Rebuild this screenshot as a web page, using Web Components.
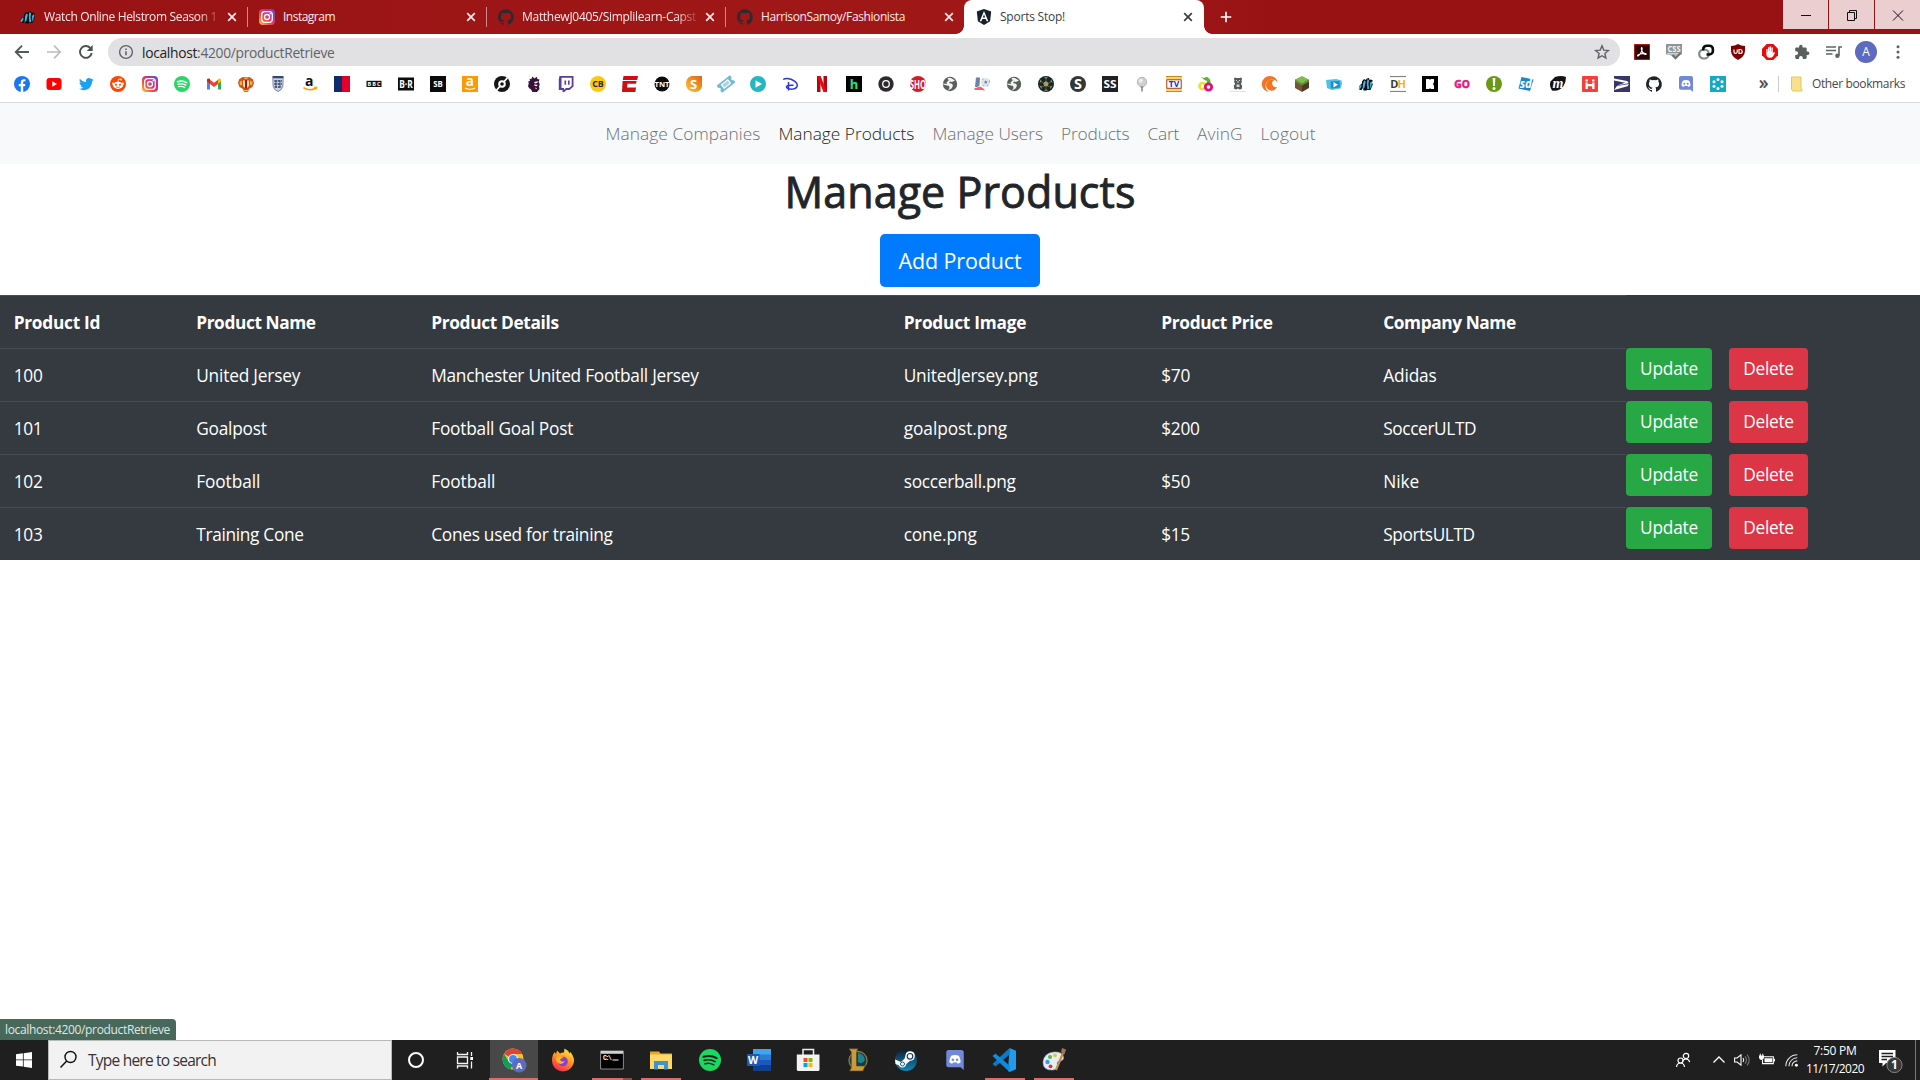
<!DOCTYPE html>
<html lang="en">
<head>
<meta charset="utf-8">
<title>Sports Stop!</title>
<style>
html,body{margin:0;height:100%}
body{width:1920px;height:1080px;overflow:hidden;background:#fff;font-family:"Open Sans","Noto Sans",sans-serif}
</style>
</head>
<body>
<desktop-screen></desktop-screen>
<script>
const T = (x, y, s, fill, txt, extra = '') =>
  `<text x="${x}" y="${y}" font-size="${s}" fill="${fill}" text-anchor="middle" font-family="Open Sans,sans-serif" font-weight="700" ${extra}>${txt}</text>`;
const GH = c => `<path fill="${c}" d="M8 .2a8 8 0 0 0-2.500 15.600c.4.100.5-.2.500-.4v-1.500c-2.200.500-2.700-1-2.700-1-.4-.9-.9-1.200-.9-1.200-.7-.500.100-.500.100-.500.800.100 1.200.8 1.200.8.700 1.200 1.900.9 2.300.7.100-.500.300-.9.500-1.100-1.800-.2-3.600-.9-3.600-4 0-.9.300-1.600.800-2.100-.1-.2-.4-1 .1-2.100 0 0 .7-.2 2.200.8a7.600 7.600 0 0 1 4 0c1.500-1 2.200-.8 2.200-.8.4 1.100.2 1.900.1 2.100.5.600.8 1.300.8 2.100 0 3.100-1.900 3.700-3.700 3.900.3.300.6.800.6 1.500v2.300c0 .2.100.5.600.4A8 8 0 0 0 8 .2z"/>`;
const INSTA = `<defs><linearGradient id="ig" x1="0" y1="1" x2="1" y2="0"><stop offset="0" stop-color="#fdc653"/><stop offset=".35" stop-color="#f0503f"/><stop offset=".65" stop-color="#c32d96"/><stop offset="1" stop-color="#5851db"/></linearGradient></defs><rect width="16" height="16" rx="4" fill="url(#ig)"/><rect x="2.700" y="2.700" width="10.600" height="10.600" rx="3" fill="none" stroke="#fff" stroke-width="1.300"/><circle cx="8" cy="8" r="2.500" fill="none" stroke="#fff" stroke-width="1.300"/><circle cx="11.200" cy="4.800" r=".8" fill="#fff"/>`;
const STRIPES = `<path fill="#0b0d10" d="M1 10.500l2-2.500 1-.5V5.500L6 3l1.500 1L9 2.500 11 2l.5 2 1.500-.5 1.800 1-.8 2 .8 2-2.300 5.500H9l-.5.500H5.500L5 12l-1.500 2H1.500z"/><path fill="#3fb4dd" d="M1 10.800l2.200-2.600.3 2L2 13H.7zM5 7.500l1.200-3 1.600 1-1.500 6.700-1.600.6zM8.800 6l.8-3 1.500 1.200-.6 4 .8 4.500-2 .8zM12 7l1.500-1.800.6 1.500-.8 4-1 2z"/>`;
const SPOT = `<circle cx="8" cy="8" r="8" fill="#1ed760"/><g fill="none" stroke="#16241a" stroke-linecap="round"><path stroke-width="1.500" d="M3.300 5.700c3-.9 6.800-.6 9.500 1"/><path stroke-width="1.200" d="M3.800 8.300c2.700-.8 5.600-.4 7.900.9"/><path stroke-width="1" d="M4.300 10.700c2.300-.6 4.500-.3 6.500.8"/></g>`;
const DISC = `<path fill="#7289da" d="M3 0h10a2 2 0 0 1 2 2v14l-2.500-2.200H3a2 2 0 0 1-2-2V2a2 2 0 0 1 2-2z"/><path fill="#fff" d="M5 4.500c2-.8 4-.8 6 0 1 1.600 1.500 3.500 1.500 5.300-.8.7-1.500 1-2.300 1.100l-.6-1H6.400l-.6 1c-.8-.1-1.500-.4-2.300-1.100 0-1.800.5-3.700 1.500-5.300z"/><circle cx="6.300" cy="7.700" r="1" fill="#7289da"/><circle cx="9.700" cy="7.700" r="1" fill="#7289da"/>`;
const SGLOBE = `<circle cx="8" cy="8" r="7.200" fill="#59605c"/><path fill="#fff" d="M6 1.800l3 .2L13 4.500 10 6 8 5.500 7 7l3 .7 1 2-1.500 2.800L6 14.500 7.500 12 7 10 1.200 8.500 1 7.500 5 8 4.500 6.500 7 4 5.500 3z" opacity=".92"/>`;

const ICONS = {
  stripes: STRIPES, insta: INSTA, ghdark: GH('#2b2b30'), github: GH('#20242a'),
  angular: `<path fill="#15202b" d="M8 0l7.200 2.500-1.100 9.700L8 16l-6.100-3.800L.8 2.500z"/><path fill="#fff" fill-rule="evenodd" d="M8 2L3.700 12.200h1.700l.9-2.300h3.400l.9 2.300h1.700zM8 5.400l1.200 3.100H6.800z"/>`,
  facebook: `<circle cx="8" cy="8" r="8" fill="#1877f2"/><path fill="#fff" d="M6.800 16v-5.700h-2V8h2V6.300c0-2 1.200-3.100 3-3.100.900 0 1.700.1 1.700.1v2h-1c-1 0-1.300.6-1.300 1.200V8h2.200l-.4 2.300H9.200V16z"/>`,
  youtube: `<rect x="0.500" y="2" width="15" height="12" rx="3" fill="#f00"/><path fill="#fff" d="M6.300 5.200L11 8l-4.700 2.800z"/>`,
  twitter: `<path fill="#1da1f2" d="M15.500 3.600a6 6 0 0 1-1.700.5c.6-.4 1.100-1 1.300-1.700-.6.4-1.200.6-1.900.7A3 3 0 0 0 8 5.900C5.500 5.800 3.300 4.600 1.900 2.700c-.8 1.400-.3 3.200 1 4.100-.5 0-1-.1-1.400-.4 0 1.500 1 2.700 2.400 3-.4.100-.9.100-1.300 0 .4 1.200 1.500 2.100 2.800 2.100A6 6 0 0 1 1 12.800C7.500 16.500 14.200 12 14 5.200c.6-.4 1.100-1 1.500-1.600z"/>`,
  reddit: `<circle cx="8" cy="8" r="8" fill="#ff4500"/><ellipse cx="8" cy="9.300" rx="5" ry="3.600" fill="#fff"/><circle cx="3.300" cy="7.800" r="1.200" fill="#fff"/><circle cx="12.700" cy="7.800" r="1.200" fill="#fff"/><circle cx="11" cy="3.500" r="1" fill="#fff"/><path d="M8 6l.6-3 2.400.5" stroke="#fff" fill="none" stroke-width=".8"/><path d="M6 10.900q2 1.200 4 0" stroke="#ff4500" fill="none" stroke-width=".7"/><circle cx="6" cy="8.800" r="1" fill="#ff4500"/><circle cx="10" cy="8.800" r="1" fill="#ff4500"/>`,
  spotify: `<circle cx="8" cy="8" r="8" fill="#2bd566"/><g fill="none" stroke="#fff" stroke-linecap="round"><path stroke-width="1.600" d="M3.500 5.700c3-.9 6.600-.6 9.200 1"/><path stroke-width="1.400" d="M4 8.300c2.700-.8 5.400-.4 7.700.9"/><path stroke-width="1.200" d="M4.500 10.700c2.300-.6 4.300-.3 6.300.8"/></g>`,
  gmail: `<path fill="#4285f4" d="M1 5v8.500h3V7z"/><path fill="#34a853" d="M12 13.500h3V5l-3 2z"/><path fill="#ea4335" d="M4 8V3.800l4 3 4-3V8l-4 3z"/><path fill="#c5221f" d="M1 5.500V4c0-1.600 1.700-2 3-.9V7.700z"/><path fill="#fbbc04" d="M15 5.500V4c0-1.600-1.700-2-3-.9v4.600z"/>`,
  manu: `<path fill="#d2521a" d="M4.500 1h7L15 3.500 16 7l-1.500 4-3.500 2-1 3H6l-1-3-3.500-2L0 7l1-3.500z"/><path fill="#f3b63a" d="M5 1.500l6 0L8 3.500zM1.500 6L4 4.500v4l-2 1zM14.500 6L12 4.500v4l2 1zM6 14h4v1.200H6z"/><path fill="#fbe3b0" d="M5 4.500h2V12L5 10zM9 4.500h2V10l-2 2z"/><path fill="#a81515" d="M7 4h2v8.500H7z"/>`,
  england: `<path fill="#ccd4e2" d="M2.500 1h11l-.3 9.500Q12 14.500 8 16 4 14.500 2.800 10.500z"/><path fill="#34496f" d="M2.500 0h11v2.300h-11z"/><path fill="none" stroke="#5d7096" stroke-width=".7" d="M2.800 2.500L3.200 10.500Q4.500 14.300 8 15.500q3.500-1.200 4.800-5L13.200 2.500"/><path fill="none" stroke="#2e426d" stroke-width="1.500" stroke-dasharray="2.500 .8" d="M4.300 5h7.600M4.300 8h7.600M4.700 11h6.800"/><path stroke="#2e426d" stroke-width=".8" d="M6 4v7.500M10 4v7.500"/>`,
  amazon: T(7.300, 10, 14, '#111', 'a') + `<path d="M1.500 11.700q6.300 4 12.500.3" fill="none" stroke="#f90" stroke-width="1.500"/><path d="M12 11.200l2.800-.2-.7 2.500" fill="none" stroke="#f90"/>`,
  mlb: `<path fill="#0c2c6b" d="M0 0h8v16H0z"/><path fill="#e4002b" d="M8 0h8v16H8z"/>`,
  bbc: `<path fill="#111" d="M.5 4.800h15V11H.5z"/>` + T(3.300, 10, 5.500, '#fff', 'B') + T(8, 10, 5.500, '#fff', 'B') + T(12.800, 10, 5.500, '#fff', 'C'),
  br: `<path fill="#0b0b0b" d="M0 1.500h16v13H0z"/>` + T(8, 11.600, 10, '#fff', 'B·R', 'textLength="13.500" lengthAdjust="spacingAndGlyphs"'),
  sb: `<path fill="#0b0b0b" d="M0 0h16v16H0z"/>` + T(8, 11.300, 8.500, '#fff', 'SB', 'textLength="9.500" lengthAdjust="spacingAndGlyphs"'),
  aorange: `<path fill="#ff9900" d="M0 0h16v16H0z"/>` + T(7.800, 10.400, 13.500, '#fff', 'a') + `<path d="M3 12q5 2.600 10 0" fill="none" stroke="#fff" stroke-width="1.300"/>`,
  disc: `<circle cx="8" cy="8" r="8" fill="#161616"/><path d="M9 7l5.500-6.500M7 9l-5.500 6.500" stroke="#fff" stroke-width="1.800"/><circle cx="8" cy="8" r="3.800" fill="#fff"/><circle cx="8" cy="8" r="1.800" fill="#161616"/>`,
  pl: `<path fill="#3a1238" d="M3.500 2.500l1.700.8L6.500.5l1.700 2L11 .8l.3 2.200 2.200.5L12.500 6q2 2 .5 4.500L13.500 13 11 16H6.500L5 13.500 3 12l-1-2 .8-2.500L2.200 5.500 4 5z"/><path fill="#fff" d="M8 6l4-.8-.5 1.500-2.500.7zM8 8.500l3.500.3-.5 1.500-2.500-.6zM9 11.500l2 .8-1 1z"/>`,
  twitch: `<path fill="#5a3e9b" d="M1.500 0H15.500v10.500L11.500 14H8.500l-2.200 2H4.500v-2H.8V3z"/><path fill="#fff" d="M3.500 1.800h10.200v8l-2.500 2.200H8l-2 1.700V12H3.500z"/><path fill="#5a3e9b" d="M6.500 4.500h1.600v4.300H6.500zM10 4.500h1.600v4.300H10z"/>`,
  cb: `<circle cx="8" cy="8" r="8" fill="#fbc912"/>` + T(8, 11, 8.800, '#272a3a', 'CB'),
  espn: `<path fill="#d00d12" d="M1.500 0H16l-.7 4H.8zM.6 5h14l-.6 2.800H5.500L5 11.500h9L13.400 16H0z"/>`,
  tnt: `<circle cx="8" cy="8" r="7.500" fill="#0a0a0a"/>` + T(8, 10.600, 7, '#fff', 'TNT', 'textLength="15" lengthAdjust="spacingAndGlyphs"'),
  sling: `<defs><linearGradient id="sl" x1="1" y1="0" x2="0" y2="1"><stop offset="0" stop-color="#e0601f"/><stop offset=".6" stop-color="#f5a01f"/><stop offset="1" stop-color="#fcc52f"/></linearGradient></defs><path fill="url(#sl)" d="M6 0h10V10a6.500 6.500 0 0 1-6 6C3 16.500 0 12 0 8 0 3 3 .2 6 0z"/>` + T(7.600, 12.700, 13, '#fff', 'S'),
  ticket: `<g transform="rotate(-38 8 8)"><path fill="#74b9d4" d="M-.5 3.500h17v3a1.500 1.500 0 0 0 0 3v3h-17v-3a1.500 1.500 0 0 0 0-3z"/><path stroke="#fff" stroke-width="1.100" fill="#a9d4e6" d="M4 5.800h8v4.400H4z"/></g>`,
  play: `<circle cx="8" cy="8" r="8" fill="#24b7c3"/><path fill="#fff" d="M5.500 4.300L12 8l-6.500 3.700z"/>`,
  disney: `<path fill="none" stroke="#2a35e0" stroke-width="1.500" d="M1.200 3.500Q4 1.500 9 3.300q6 2.400 6.300 6-.3 4.200-6.800 3.800-4-.3-4-2.300.3-2 7-1.500M6.500 6v8.500"/>`,
  netflix: `<path fill="#b20710" d="M3 0h3.500v16H3zM9.500 0H13v16H9.500z"/><path fill="#e50914" d="M3 0h3.500L13 16H9.500z"/>`,
  hulu: `<path d="M0 0h16v16H0z"/>` + T(8, 12.500, 13, '#1ce783', 'h'),
  ring: `<circle cx="8" cy="8" r="7.700" fill="#2c2a2c"/><circle cx="8" cy="8" r="3.300" fill="none" stroke="#fff" stroke-width="1.300"/>`,
  sho: `<circle cx="8" cy="8" r="8" fill="#d8191f"/>` + T(8, 12.500, 12.500, '#fff', 'SHO', 'textLength="16.500" lengthAdjust="spacingAndGlyphs"'),
  sglobe: SGLOBE,
  soccer: `<path fill="#6d80a6" d="M2 1.500h4l-.5 8-2 1.500H1z"/><path fill="#e2696a" d="M0 12.500l6-2 3 1.500 2 2.500-4-.5H1z"/><circle cx="11.500" cy="6.500" r="4.500" fill="#dde4ef"/><path fill="#7689b0" d="M10.300 5.500l1.500-1 1.500 1.200-.6 1.900h-1.900zM15 3.500l1 2.500-1 .5zM8 3l1.500-.8L9 4zM8 9l1.300.3.5 1.400zM13 9.500l1.500-.5-1 1.500z"/>`,
  ballgold: `<circle cx="8" cy="8" r="8" fill="#15252c"/><path fill="#a89b57" d="M8 5l2.800 2-1 3.300H6.200l-1-3.300zM6 1.200h4L8 3zM13 3.300l1.600 3.200-2.200-.6zM14.500 9.500l-2 3.400-.4-2.400zM3 3.300L1.400 6.500l2.200-.6zM1.500 9.500l2 3.400.4-2.400zM6 14.700L8 13l2 1.700z"/><path stroke="#76713f" stroke-width=".7" d="M8 5V3M10.800 7l1.600-1.100M9.800 10.300l2.300.2M6.200 10.300l-2.300.2M5.200 7L3.600 5.900M8 10v3"/>`,
  sround: `<circle cx="8" cy="8" r="8" fill="#333736"/>` + T(8, 13.200, 14.500, '#fff', 'S'),
  ss: `<path fill="#202124" d="M0 0h16v16H0z"/>` + T(8, 12, 11, '#fff', 'SS', 'textLength="13" lengthAdjust="spacingAndGlyphs"'),
  golf: `<circle cx="8" cy="6" r="4.700" fill="#cfcfcf" stroke="#a5a5a5" stroke-width=".7"/><circle cx="6.800" cy="4.800" r="2" fill="#eee"/><path fill="#8b8b8b" d="M6 10.600h4L8.800 12v3.500H7.200V12z"/>`,
  tv: `<path fill="#fbd46b" d="M0 0h16v16H0z"/><path fill="#c98a1f" d="M0 0h16v1H0zM0 15h16v1H0z"/><path fill="#fff" stroke="#a5442c" stroke-width="1" d="M.8 3.800h14.400v8.500H.8z"/>` + T(8, 11.300, 8.500, '#1d2fc8', 'TV'),
  flower: `<path fill="#58b62c" d="M3 1l3 1q3-2 5 .5 2.500 2.500 1 5L8.500 8 9 5 6.500 4z"/><circle cx="4.500" cy="10" r="3" fill="none" stroke="#f3dc2a" stroke-width="2.600"/><circle cx="10.500" cy="11" r="3.200" fill="none" stroke="#dc1482" stroke-width="2.800"/>`,
  bear: `<path fill="#55595a" d="M4 2.500Q5 1 6 2h4q1-1 2 .5L11.500 5l.5 1-1.200 1.700 1.400 2-.5 3.300-2.200.5-1.500-1-1.500 1L4.300 13l-.5-3.300 1.400-2L4 6l.5-1z"/><path fill="#d8d8d8" d="M6 4h1v1H6zM9 4h1v1H9zM7 5.500h2v1H7zM6.500 8.500h3V11h-3z"/><path stroke="#e2e2e2" d="M0 15.500h16"/>`,
  crunchy: `<path fill="#f47521" d="M8 0a8 8 0 0 1 7.900 7.200A6.500 6.500 0 1 0 7.500 16 8 8 0 0 1 8 0z"/><path fill="#f47521" d="M9.800 3.500A5.600 5.600 0 1 0 15 10.800a2.600 2.600 0 1 1-2.500-6.700 5.600 5.600 0 0 0-2.700-.6z"/>`,
  minecraft: `<path fill="#7fbc4c" d="M8 0l7 3.600L8 7.500 1 3.600z"/><path fill="#7a5236" d="M1 3.600l7 3.900V16l-7-4z"/><path fill="#553724" d="M15 3.600L8 7.500V16l7-4z"/><path fill="#5c9335" d="M1 3.600l7 3.900v2L1 5.800zM15 3.600L8 7.500v2l7-3.700z"/>`,
  playbox: `<path fill="#55bfe8" d="M0 4l10-1 5.500 1.500.5 3-1.500 5L6 14 1 12z"/><path fill="#1b8fca" d="M4.500 5.500l9-.5.5 6.500-9 1z"/><path fill="#fff" d="M7.500 6l4.500 2.700-4.500 2.800z"/>`,
  dh: `<path stroke="#777" d="M0 .6h16M0 15.400h16"/>` + T(4.300, 12, 11, '#3a3a3a', 'D') + T(11.600, 12, 11, '#efb31c', 'H'),
  kick: `<path d="M0 0h16v16H0z"/><path fill="#fff" d="M4 3.500Q4 3 4.500 3H7l1 .8L9 3h2.500q.5 0 .5.500v2.800l-1 1.700 1 1.700v2.800q0 .5-.5.5H9l-1-.8-1 .8H4.500Q4 13 4 12.500z"/>`,
  go: T(8, 12, 10.500, '#e5197e', 'GO', 'textLength="15.500" lengthAdjust="spacingAndGlyphs" stroke="#e5197e" stroke-width=".6"'),
  bang: `<circle cx="8" cy="8" r="8" fill="#689a14"/><path fill="#fff" d="M6.600 2h2.800l-.5 8H7.100z"/><circle cx="8" cy="12.500" r="1.500" fill="#fff"/>`,
  sd: `<path fill="#1b87c6" d="M3.500 1L15.500 3.500 12 15 .5 12.500z"/>` + T(7.800, 12, 11.500, '#fff', 'sd', 'font-style="italic"'),
  m: `<path fill="#131313" d="M5 1Q11-1 16 1q0 5-2.500 9Q9 16 2 14.500-1 10 .5 5.500z"/><text x="8" y="11.800" font-size="14" fill="#fff" text-anchor="middle" font-family="Liberation Serif,serif" font-style="italic" font-weight="700">m</text>`,
  hh: `<rect width="16" height="16" rx="1" fill="#f2403d"/><path fill="#fff" d="M3.500 6.500h2.300V8h4.400V6.500h2.300V13h-2.300v-2.800H5.800V13H3.500z"/><circle cx="4.700" cy="4.400" r="1.200" fill="#fff"/><circle cx="11.300" cy="4.400" r="1.200" fill="#fff"/>`,
  usps: `<path fill="#36366a" d="M0 0h16v16H0z"/><path fill="#fff" d="M0 2.500L13 5q2 .7 1.300 2.200L3 9.500l8-2.700L0 4.500zM0 14L3 10l12-2-1.500 2.200z"/>`,
  discord: DISC,
  teal: `<path fill="#15a9c4" d="M0 0h16v16H0z"/><g fill="#fff"><circle cx="8" cy="3.500" r="1.500"/><circle cx="12" cy="5.700" r="1.500"/><circle cx="12" cy="10.300" r="1.500"/><circle cx="8" cy="12.500" r="1.500"/><circle cx="4" cy="10.300" r="1.500"/><circle cx="4" cy="5.700" r="1.500"/></g>`,
  pdf: `<path fill="#2a0504" stroke="#a51d10" d="M.5.500h15v15H.5z"/><path fill="none" stroke="#fff" stroke-width="1.100" d="M7.500 3.500c1.300 0 .5 3.500-1.200 6.300s-3.100 2.500-2.700 1.700 4.400-2.400 7-2.100 1.800 1.700-.4.600S6.700 3.900 7.500 3.500z"/>`,
  css: `<path fill="#8f9494" d="M0 0h16v10.500H0z"/><path fill="#b5b9b9" d="M2 10h10l-3 4z"/><path stroke="#e2e4e4" stroke-width=".8" d="M1 9.500h14" />` + T(8, 8.300, 8.500, '#f4f4f4', 'CSS', 'textLength="13" lengthAdjust="spacingAndGlyphs"') + `<path d="M6.500 11l3 3.200L14.500 9" fill="none" stroke="#6d7272" stroke-width="2.200"/>`,
  links: `<g fill="none"><rect x="1.200" y="5.500" width="9.600" height="9" rx="4.300" stroke="#858989" stroke-width="2.200"/><path stroke="#0c0c0c" stroke-width="2.600" d="M5.200 6.500V5.300A3.600 3.600 0 0 1 8.800 1.700h2.500a3.600 3.600 0 0 1 3.600 3.600v1.600a3.600 3.600 0 0 1-3.600 3.600H8.500"/></g>`,
  ublock: `<path fill="#800000" d="M8 0q3 2 7 2v5q-.5 6-7 9Q1.500 13 1 7V2q4 0 7-2z"/><path d="M4 5.500v2.300a1.600 1.600 0 0 0 3.200 0V5.500M9 5.500v4h1.200a2 2 0 0 0 0-4z" fill="none" stroke="#fff" stroke-width="1.200"/>`,
  adblock: `<path fill="#e40d0d" d="M4.700 0h6.600L16 4.700v6.600L11.300 16H4.700L0 11.300V4.700z"/><path fill="#fff" d="M4.300 5h1.300V8h.4V3.300h1.400V7.500h.3V2.600h1.400v5h.4V3.500h1.300v6l1-1.500 1.200.7-2 3.700q-1 1.300-3.200 1.300-3 0-3.400-3z"/>`,
  puzzle: `<path fill="#5a615d" d="M13.700 7.500h-1V4.600c0-.7-.6-1.200-1.300-1.200H8.600v-1a1.700 1.700 0 0 0-3.500 0v1H2.400c-.7 0-1.200.5-1.200 1.200v2.600h1a1.900 1.900 0 0 1 0 3.800h-1v2.600c0 .7.500 1.300 1.200 1.300H5v-1a1.900 1.900 0 0 1 3.800 0v1h2.600c.7 0 1.300-.6 1.300-1.300V11h1a1.700 1.700 0 0 0 0-3.500z"/>`,
  music: `<path fill="none" stroke="#5f6368" stroke-width="1.600" d="M0 3h10M0 6.500h10M0 10h6.500M16 3h-3v8.500"/><circle cx="11.400" cy="11.700" r="2.200" fill="#5f6368"/>`,
  dots: `<g fill="#5f6368"><circle cx="8" cy="2.800" r="1.500"/><circle cx="8" cy="8" r="1.500"/><circle cx="8" cy="13.200" r="1.500"/></g>`,
  back: `<path d="M15 8H2.200M8 1.700L1.800 8 8 14.300" fill="none" stroke="#55585c" stroke-width="1.900"/>`,
  fwd: `<path d="M1 8h12.800M8 1.700L14.200 8 8 14.300" fill="none" stroke="#babcbe" stroke-width="1.700"/>`,
  reload: `<path d="M13.700 9A5.900 5.900 0 1 1 12.300 4" fill="none" stroke="#4c4f52" stroke-width="1.900"/><path fill="#4c4f52" d="M14.700 1v6H8.700z"/>`,
  info: `<circle cx="8" cy="8" r="6.400" fill="none" stroke="#5f6368" stroke-width="1.400"/><path stroke="#5f6368" stroke-width="1.600" d="M8 7.200v4M8 4.400V6"/>`,
  star: `<path fill="none" stroke="#5f6368" stroke-width="1.400" d="M8 1.800l1.800 4.300 4.600.4-3.500 3 1 4.600L8 11.700l-3.900 2.400 1-4.600-3.500-3 4.600-.4z"/>`,
  folder: `<path fill="#fbe08c" stroke="#e7c65a" d="M2.500 1h9.500v12.500H13v1.500H4l-1.500-1.500z"/>`,
  /* taskbar and tray glyphs: [viewBox size, markup] */
  start: [24, `<path fill="#fff" d="M4 6.300l6.900-1v6.200H4zM11.700 5.200L20 4v7.500h-8.300zM4 12.300h6.900v6.300L4 17.700zM11.700 12.300H20V20l-8.300-1.200z"/>`],
  search: [24, `<circle cx="14.500" cy="9" r="5.500" fill="none" stroke="#111" stroke-width="1.400"/><path d="M10.700 13L4.500 19.500" stroke="#111" stroke-width="1.500"/>`],
  cortana: [24, `<circle cx="12" cy="12" r="7" fill="none" stroke="#fff" stroke-width="2"/>`],
  taskview: [24, `<path fill="none" stroke="#f2f2f2" stroke-width="1.300" d="M4.500 4v2.500h10V4M4.500 9h10v6.500h-10zM4.500 20.500V18h10v2.500M18.500 4v4M18.500 13.500v7"/><path fill="#fff" d="M17.300 9h2.700v3h-2.700z"/>`],
  chrome: [24, `<circle cx="11" cy="11" r="10.500" fill="#fbc02d"/><path fill="#db4437" d="M11 11L2 5.700A10.500 10.500 0 0 1 20.200 6H11z"/><path fill="#0f9d58" d="M2 5.700L7 14l4.500 1.500-3 5.700A10.500 10.500 0 0 1 2 5.700z"/><circle cx="11" cy="11" r="5" fill="#f1f1f1"/><circle cx="11" cy="11" r="3.900" fill="#4285f4"/><circle cx="17.200" cy="17.300" r="7.300" fill="#5c6bc0"/>` + T(17.200, 20.500, 9, '#fff', 'A')],
  firefox: [24, `<defs><linearGradient id="ff" x1=".8" y1="0" x2=".3" y2="1"><stop offset="0" stop-color="#fff04a"/><stop offset=".45" stop-color="#ff9a1f"/><stop offset="1" stop-color="#f5264e"/></linearGradient></defs><path fill="url(#ff)" d="M3.500 4l1.500 2 1-3.500 3 3q2-1.500 4-1L13.500.5q3.500 1.500 5 5l1-1.500Q25 11 22 17q-3.500 6.500-10.500 6.500Q4 23 1.500 16 0 9 3.500 4z"/><circle cx="12" cy="13.500" r="4.800" fill="#8a3fd1"/><path fill="#ffb12b" d="M5 9.500q4-2.500 7.500.5-3 .2-3.500 2 2 2.500 5 1-2 4-6 2.500Q4.500 14 5 9.500z"/>`],
  cmd: [24, `<path fill="#000" stroke="#aaa" stroke-width=".8" d="M.6 3h22.800v18H.6z"/><path fill="#cfcfcf" d="M1 3h22v2.800H1z"/><text x="3" y="12.300" font-size="6.500" fill="#fff" font-family="Liberation Mono,monospace" font-weight="700" textLength="9">C:\\</text><path d="M12.500 12h6" stroke="#fff"/>`],
  explorer: [24, `<path fill="#e8a825" d="M1 3.500h9l1.500 2H23V12H1z"/><path fill="#ffd867" d="M1 6.500h22V21H1z"/><path fill="#3d93d4" d="M5 13h14v8.500h-4V17H9v4.500H5z"/><path fill="#ffd867" d="M9 17h6v2.500H9z"/>`],
  spot24: [16, SPOT],
  word: [24, `<path fill="#41a5ee" d="M6 1h18v6H6z"/><path fill="#2b7cd3" d="M6 6.500h18V12H6z"/><path fill="#185abd" d="M6 12h18v5.500H6z"/><path fill="#103f91" d="M6 17h18v6H6z"/><path fill="#185abd" d="M0 6h12.500v12H0z"/>` + T(6.200, 16, 10.500, '#fff', 'W')],
  store: [24, `<path fill="none" stroke="#eee" stroke-width="1.500" d="M7 7V1.500h10.500V7"/><path fill="#f3f3f3" d="M.8 6.500h22.700v15q0 1.500-1.500 1.500H2.300Q.8 23 .8 21.500z"/><path fill="#f25022" d="M7.500 10h4v4h-4z"/><path fill="#7fba00" d="M12.500 10h4v4h-4z"/><path fill="#00a4ef" d="M7.500 15h4v4h-4z"/><path fill="#ffb900" d="M12.500 15h4v4h-4z"/>`],
  lol: [24, `<circle cx="13" cy="12.500" r="9" fill="#0e3f48" stroke="#93763c" stroke-width="1.300"/><path fill="#1f8090" d="M13 5q6 1 7 7-3 5-7 2z"/><path fill="#c89b3c" stroke="#5d4519" stroke-width=".6" d="M4 .8h9l-1.500 3V18H20l-2 5H4.500l1.800-3V4z"/>`],
  steam: [24, `<defs><linearGradient id="st" x1="0" y1="0" x2="0" y2="1"><stop offset="0" stop-color="#111d2e"/><stop offset="1" stop-color="#1387b8"/></linearGradient></defs><circle cx="12" cy="12" r="11" fill="url(#st)"/><path fill="#fff" d="M1 11.500l6 2.500 3.700-3.500L11.500 7a4.700 4.700 0 1 1 4.500 5.700L12.300 16a4 4 0 0 1-7.600 1.200L1.500 16z"/><circle cx="16" cy="8.300" r="2.800" fill="none" stroke="#183a58" stroke-width="1.200"/><circle cx="8.500" cy="16" r="2" fill="none" stroke="#1a5c86"/>`],
  disc24: [16, DISC],
  vscode: [24, `<path fill="#1f9cf0" d="M17.500 0L24 2.800v18.400L17.500 24 16 23z"/><path fill="#0a7acb" d="M17.500 0v6.500L3.500 18.500 .5 16z"/><path fill="#1389d8" d="M17.500 24v-6.500L3.500 5.500.5 8z"/>`],
  paint: [24, `<path fill="#e3edf5" stroke="#9db4c6" stroke-width=".6" d="M1 14Q2 5 12 4q8-.5 9.500 5 .5 4-4.500 4-3 1-1.500 4 .5 4.500-5 5Q1 22.500 1 14z"/><circle cx="5.500" cy="14" r="2.200" fill="#3d9be0"/><circle cx="8" cy="9" r="2" fill="#53b848"/><circle cx="13" cy="7.300" r="1.900" fill="#f3c22f"/><circle cx="8.500" cy="18.300" r="1.900" fill="#d7392f"/><path d="M14 22L21 5" stroke="#c98a4d" stroke-width="2.200"/><path fill="#9c7556" d="M19 4L20 0l4 1.500-1.500 5z"/>`],
  people: [16, `<g fill="none" stroke="#fff" stroke-width="1.200"><circle cx="11" cy="4" r="2.700"/><path d="M7.500 10q.5-3 3.500-3t3.700 3.200"/><circle cx="5.500" cy="8.500" r="2.500"/><path d="M1.500 15q.5-4 4-4t4 4"/></g>`],
  chev: [16, `<path fill="none" stroke="#fff" stroke-width="1.300" d="M2.500 10.500L8 5l5.500 5.500"/>`],
  speaker: [16, `<path fill="none" stroke="#fff" stroke-width="1.100" d="M.6 6h2.500L7 2.800v10.400L3.100 10H.6zM9 6q1.500 2 0 4"/><path fill="none" stroke="#777" stroke-width="1.100" d="M11 4.300q3 3.700 0 7.400M13 2.500q4.500 5.500 0 11"/>`],
  battery: [16, `<path fill="none" stroke="#fff" stroke-width="1.100" d="M5 4.800h9.300v6.800H3.500V8"/><path fill="#fff" d="M5.500 6.200h7.700v4H5.500zM14.800 6.800H16v2.800h-1.200zM0 3.500h5v2.200Q4.500 8 2.500 8T0 5.700zM.8 1.800h1v2h-1zM3.300 1.800h1v2h-1z"/>`],
  wifi: [16, `<g fill="none" stroke="#e8e8e8" stroke-width="1.200"><path d="M1 15A13 13 0 0 1 14 2M4.500 15A9.500 9.500 0 0 1 14 5.500M8 15a6 6 0 0 1 6-6"/></g><circle cx="13" cy="14" r="1.700" fill="#fff"/>`],
  notif: [24, `<path fill="#fff" d="M1 2h16.500v13H8l-3.500 3.500V15H1z"/><path stroke="#1f1f1f" stroke-width="1.300" d="M3.500 5.500h11.500M3.500 8.500h11.500M3.500 11.500H9"/><circle cx="16.500" cy="17" r="7.600" fill="#383838" stroke="#858585"/>` + T(16.500, 21.200, 12, '#fff', '1')],
  min: `<path stroke="#111" d="M3 8.500h10"/>`,
  max: `<path fill="none" stroke="#111" d="M3.500 5.500h7v8h-7zM5.500 5.500v-2h7v8h-2"/>`,
  winx: `<path stroke="#111" d="M3 3.500l10 10M13 3.500l-10 10"/>`,
  tabx: `<path stroke="currentColor" stroke-width="1.700" d="M4.200 4.200l7.600 7.600M11.800 4.200l-7.600 7.600"/>`,
  plus: `<path stroke="#fff" stroke-width="1.900" d="M8 2v12M2 8h12"/>`
};

const el = (name, css, html, setup) => customElements.define(name, class extends HTMLElement {
  connectedCallback() {
    if (this.shadowRoot) return;
    const t = document.createElement('template');
    t.innerHTML = `<style>${css}</style>${typeof html === 'function' ? html(this) : html}`;
    this.attachShadow({ mode: 'open' }).append(t.content.cloneNode(true));
    if (setup) setup(this);
  }
});

el('desktop-screen', `:host{display:flex;flex-direction:column;width:1920px;height:1080px;position:relative;background:#fff}
  shop-page{flex:1}`,
  `<tab-strip></tab-strip><address-bar></address-bar><bookmark-bar></bookmark-bar><shop-page></shop-page><task-bar></task-bar>`);

el('tab-strip', `:host{display:flex;height:34px;background:linear-gradient(90deg,#981214,#a01717 40%,#a01717 60%,#981214 66%);padding-left:8px;justify-content:space-between}
  div{display:flex}.new{width:44px;justify-content:center;align-items:center;height:34px}
  .win{gap:1px}.win span{width:45px;height:29px;background:#ebcfd0;display:flex;align-items:center;justify-content:center}`,
  `<div>
   <browser-tab icon="stripes" w="173" cut>Watch Online Helstrom Season 1</browser-tab>
   <browser-tab icon="insta" w="52">Instagram</browser-tab>
   <browser-tab icon="ghdark" w="174" cut>MatthewJ0405/Simplilearn-Capst</browser-tab>
   <browser-tab icon="ghdark" w="144" last>HarrisonSamoy/Fashionista</browser-tab>
   <browser-tab icon="angular" w="65" active>Sports Stop!</browser-tab>
   <div class="new"><ui-icon name="plus" size="14"></ui-icon></div></div>
   <div class="win"><span><ui-icon name="min"></ui-icon></span><span><ui-icon name="max"></ui-icon></span><span><ui-icon name="winx"></ui-icon></span></div>`);

el('browser-tab', `:host{display:flex;box-sizing:border-box;width:239px;height:34px;padding:0 7px 0 12px;align-items:center;color:#f8eaea;font-size:12px;position:relative}
  :host(:not([active]):not([last]))::after{content:"";position:absolute;right:-1px;top:7px;width:1px;height:20px;background:#cf8788}
  :host([active]){background:#fff;color:#3c4043;border-radius:8px 8px 0 0;width:240px;padding-right:8px}
  :host([active])::before,:host([active])::after{content:"";position:absolute;bottom:0;width:8px;height:8px}
  :host([active])::before{left:-8px;background:radial-gradient(circle at 0 0,transparent 7.500px,#fff 8px)}
  :host([active])::after{right:-8px;background:radial-gradient(circle at 100% 0,transparent 7.500px,#fff 8px)}
  p{margin:0 0 0 8px;flex:1;white-space:nowrap;line-height:34px}
  :host([cut]) p{-webkit-mask:linear-gradient(90deg,#000 154px,transparent 178px)}`,
  h => `<ui-icon name="${h.getAttribute('icon')}"></ui-icon><p><fit-text w="${h.getAttribute('w')}"><slot></slot></fit-text></p><ui-icon name="tabx"></ui-icon>`);

el('address-bar', `:host{display:flex;height:36px;align-items:center;padding-left:14px;box-sizing:border-box}
  .nav{display:flex;gap:16px;width:94px}
  .pill{display:flex;align-items:center;width:1512px;height:28px;border-radius:14px;background:#e1e1e3;box-sizing:border-box;padding:0 10px;font-size:13.800px;color:#5f6368}
  .pill .url{flex:1;margin-left:8px}.pill b{font-weight:400;color:#202124}
  .ext{display:flex;gap:16px;margin-left:14px;align-items:center}
  .av{width:22px;height:22px;border-radius:50%;background:#5c6bc0;color:#fff;font-size:12px;line-height:22px;text-align:center;margin:0 -3px}`,
  `<div class="nav"><ui-icon name="back"></ui-icon><ui-icon name="fwd"></ui-icon><ui-icon name="reload"></ui-icon></div>
   <div class="pill"><ui-icon name="info"></ui-icon><span class="url"><fit-text w="192.500"><b>localhost</b>:4200/productRetrieve</fit-text></span><ui-icon name="star"></ui-icon></div>
   <div class="ext">${['pdf','css','links','ublock','adblock','puzzle','music'].map(n => `<ui-icon name="${n}"></ui-icon>`).join('')}<span class="av">A</span><ui-icon name="dots"></ui-icon></div>`);

const MARKS = 'facebook youtube twitter reddit insta spotify gmail manu england amazon mlb bbc br sb aorange disc pl twitch cb espn tnt sling ticket play disney netflix hulu ring sho sglobe soccer sglobe ballgold sround ss golf tv flower bear crunchy minecraft playbox stripes dh kick go bang sd m hh usps github discord teal'.split(' ');
el('bookmark-bar', `:host{display:flex;height:33px;box-sizing:border-box;border-bottom:1px solid #d9dbe0;padding:0 0 5px 14px;align-items:center;color:#45484b;font-size:12px}
  .m{display:flex;gap:16px}.more{width:18px;margin-left:33px;font-size:19px;line-height:16px;margin-top:-4px;-webkit-text-stroke:.4px}
  i{width:1px;height:16px;background:#c9ccd1;margin:0 10px 0 1px}
  fit-text{margin-left:7px}`,
  `<div class="m">${MARKS.map(n => `<ui-icon name="${n}"></ui-icon>`).join('')}</div><span class="more">»</span><i></i><ui-icon name="folder"></ui-icon><fit-text w="93">Other bookmarks</fit-text>`);

el('ui-icon', `:host{display:block;flex:none;line-height:0}svg{display:block;overflow:visible}`, h => {
  const d = ICONS[h.getAttribute('name')], s = h.getAttribute('size') || 16;
  const [vb, body] = Array.isArray(d) ? d : [16, d];
  return `<svg width="${s}" height="${s}" viewBox="0 0 ${vb} ${vb}">${body}</svg>`;
});

el('shop-page', `:host{display:flex;flex-direction:column;position:relative;font-size:17.300px;color:#212529}
  nav{height:60.500px;background:#f8f9fb;display:flex;justify-content:center;gap:18px;line-height:62.500px;font-weight:300;color:#6e7072;padding-left:1px}
  nav .on{color:#1c1e20}
  h1{margin:0;height:70.500px;line-height:55px;font-size:43px;font-weight:400;text-align:center;-webkit-text-stroke:.9px #212529}
  .add{align-self:center;width:160px;height:53px;line-height:54px;border-radius:5px;background:#007bff;color:#fff;font-size:21.500px;text-align:center;margin-bottom:8px}
  .status{position:absolute;left:0;bottom:0;width:176px;height:21px;box-sizing:border-box;padding-left:5px;background:#48685b;color:#dfe9e4;font-size:12px;line-height:21px;border-radius:0 4px 0 0}`,
  `<nav>${[['Manage Companies',155],['Manage Products',136,1],['Manage Users',110.500],['Products',68.500],['Cart',31.700],['AvinG',45.500],['Logout',55]].map(([t,w,a]) => `<fit-text w="${w}"${a ? ' class="on"' : ''}>${t}</fit-text>`).join('')}</nav>
   <h1><fit-text w="351">Manage Products</fit-text></h1>
   <div class="add"><fit-text w="123">Add Product</fit-text></div>
   <product-table></product-table>
   <div class="status"><fit-text w="165">localhost:4200/productRetrieve</fit-text></div>`);

const ROWS = [
  [['Product Id',86.500],['Product Name',119.500],['Product Details',127.500],['Product Image',122.500],['Product Price',111.500],['Company Name',132.500]],
  [['100',29],['United Jersey',104],['Manchester United Football Jersey',267.500],['UnitedJersey.png',134],['$70',29],['Adidas',53.500]],
  [['101',28.500],['Goalpost',70.500],['Football Goal Post',142],['goalpost.png',103.500],['$200',38.500],['SoccerULTD',93]],
  [['102',29],['Football',64],['Football',64],['soccerball.png',112],['$50',29],['Nike',36]],
  [['103',29],['Training Cone',107.500],['Cones used for training',181.500],['cone.png',73],['$15',28.500],['SportsULTD',91.500]]
];
el('product-table', `:host{display:flex;flex-direction:column;background:#343a40;color:#fff;height:265px}`,
  ROWS.map((r, i) => `<product-row${i ? '' : ' head'}>${r.map(([t, w]) => `<fit-text w="${w}">${t}</fit-text>`).join('')}</product-row>`).join(''));
el('product-row', `:host{display:grid;height:53px;grid-template-columns:182.500px 235px 472.500px 257.500px 222px 256.500px 1fr}
  :host([head]){font-weight:700}
  .c{border-top:1px solid #454d55;padding:1px 0 0 13.700px;line-height:51px;height:51px}
  .c:first-child{padding-left:13px}
  .b{display:flex;gap:17px;color:#fff}
  .b span{height:42px;line-height:42px;border-radius:4px;text-align:center;width:86px;background:#28a745}.b span+span{width:79px;background:#dc3545}`,
  h => [...h.children].map((c, i) => { c.slot = 'c' + i; return `<div class="c"><slot name="c${i}"></slot></div>`; }).join('') +
    (h.hasAttribute('head') ? '' : `<div class="b"><span><fit-text w="58">Update</fit-text></span><span><fit-text w="50.500">Delete</fit-text></span></div>`));

const APPS = [['cortana'],['taskview'],['chrome','on'],['firefox'],['cmd','two'],['explorer','run'],['spot24'],['word'],['store'],['lol'],['steam'],['disc24'],['vscode','run'],['paint','run']];
el('task-bar', `:host{display:flex;height:40px;background:#1f1f1f;color:#fff;align-items:stretch}
  .start{width:48px;display:flex;align-items:center;justify-content:center}
  .box{width:344px;box-sizing:border-box;border:1px solid #b9b9b9;background:#f2f2f2;display:flex;align-items:center;padding-left:7px;color:#333;font-size:15.500px}
  .box fit-text{margin-left:8px}
  .apps{display:flex;flex:1;margin-left:-1px}
  .apps div{width:49.080px;display:flex;align-items:center;justify-content:center;position:relative;flex:none}
  .apps .on{background:linear-gradient(90deg,transparent 1px,#484848 1px);box-shadow:inset 0 -2px #df6a6c}
  .apps .run::after,.apps .two::after{content:"";position:absolute;left:5px;width:40px;bottom:0;height:2px;background:#df6a6c}
  .apps .two::after{background:linear-gradient(90deg,#df6a6c 31px,#8f4b4c 31px)}
  .tray{display:flex;align-items:center}
  .clock{width:66px;text-align:center;font-size:12px;line-height:18px;padding-bottom:1px}
  .peek{width:4px;border-left:1px solid #777;height:40px}`,
  `<div class="start"><ui-icon name="start" size="24"></ui-icon></div>
   <div class="box"><ui-icon name="search" size="24"></ui-icon><fit-text w="128">Type here to search</fit-text></div>
   <div class="apps">${APPS.map(([n, c]) => `<div class="${c || ''}"><ui-icon name="${n}" size="${n === 'disc24' ? 20 : n === 'spot24' ? 22 : 24}"></ui-icon></div>`).join('')}</div>
   <div class="tray"><ui-icon name="people" style="margin-right:20px"></ui-icon><ui-icon name="chev" style="margin-right:7px"></ui-icon><ui-icon name="speaker" style="margin-right:9px"></ui-icon><ui-icon name="battery" style="margin-right:10px"></ui-icon><ui-icon name="wifi" size="14"></ui-icon>
   <div class="clock" style="margin-left:3px"><fit-text w="43">7:50 PM</fit-text><br><fit-text w="58">11/17/2020</fit-text></div>
   <ui-icon name="notif" size="24" style="margin:0 13px 0 10px"></ui-icon><span class="peek"></span></div>`);

/* Inline label whose letter spacing is tuned so the text spans the width given in "w". */
el('fit-text', `:host{display:inline-block;white-space:nowrap}span{display:inline-block}`, `<span><slot></slot></span>`, h => {
  const s = h.shadowRoot.querySelector('span'), w = +h.getAttribute('w');
  const slot = h.querySelector('slot');
  const text = slot ? slot.assignedNodes().map(n => n.textContent).join('') : h.textContent;
  const ls = (w - s.getBoundingClientRect().width) / text.trim().length;
  s.style.letterSpacing = ls.toFixed(3) + 'px';
});
</script>
</body>
</html>
